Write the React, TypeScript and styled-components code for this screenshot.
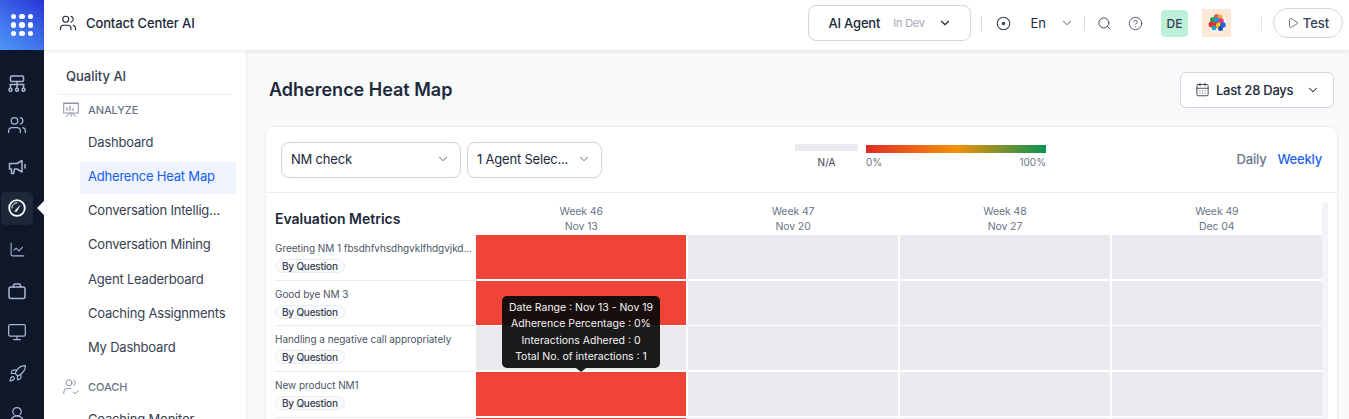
import React from "react";
import styled, { createGlobalStyle } from "styled-components";
import {
  Users, ChartLine, Monitor, Rocket, UserRound, ChevronDown,
  Search, CircleHelp, Play, CalendarDays,
} from "lucide-react";

const Global = createGlobalStyle`
  html, body { margin: 0; padding: 0; height: 100%; overflow: hidden; background: #f8f9fb; }
  #root { height: 100%; }
  * { box-sizing: border-box; }
  body { font-family: Inter, "Noto Sans", "Liberation Sans", sans-serif; color: #202939; }
`;

const Shell = styled.div`
  display: flex;
  width: 1349px;
  height: 419px;
  overflow: hidden;
`;

const Rail = styled.nav`
  width: 44px;
  flex: none;
  background: #0f172a;
  display: flex;
  flex-direction: column;
`;

const AppTile = styled.div`
  height: 50px;
  flex: none;
  background: linear-gradient(35deg, #4f97fa 0%, #3a66e6 55%, #2a33d6 100%);
  display: grid;
  grid-template-columns: repeat(3, 5.5px);
  grid-auto-rows: 5.5px;
  gap: 2.8px;
  align-content: center;
  justify-content: center;
`;

const Dot = styled.span`
  border-radius: 50%;
  background: #fff;
`;

const RailList = styled.div`
  display: flex;
  flex-direction: column;
  gap: 8.4px;
  padding: 17.5px 0 0 1px;
`;

const RailSlot = styled.div<{ $active?: boolean }>`
  position: relative;
  width: 32px;
  height: 33px;
  flex: none;
  display: flex;
  align-items: center;
  justify-content: center;
  border-radius: 5px;
  color: ${(p) => (p.$active ? "#ffffff" : "#a9b9cd")};
  background: ${(p) => (p.$active ? "#1c2738" : "transparent")};
`;

const RailPointer = styled.span`
  position: absolute;
  left: 36px;
  top: 9px;
  width: 0;
  height: 0;
  border-top: 7px solid transparent;
  border-bottom: 7px solid transparent;
  border-right: 7px solid #ffffff;
`;

const Main = styled.div`
  flex: 1;
  min-width: 0;
  display: flex;
  flex-direction: column;
`;

const Header = styled.header`
  height: 50px;
  flex: none;
  background: #fff;
  display: flex;
  align-items: center;
  padding: 0 6px 0 15px;
  box-shadow: 0 1px 4px rgba(16, 24, 40, 0.1);
  position: relative;
  z-index: 2;
`;

const Product = styled.div`
  display: flex;
  align-items: center;
  gap: 9px;
  font-size: 13px;
  font-weight: 500;
  letter-spacing: -0.12px;
  color: #202939;
  padding-bottom: 5px;
`;

const HeaderRight = styled.div`
  margin-left: auto;
  display: flex;
  align-items: center;
`;

const AgentBox = styled.div`
  width: 163px;
  height: 36px;
  margin-top: -4px;
  border: 1px solid #d3d6e0;
  border-radius: 8px;
  display: flex;
  align-items: center;
  padding: 0 18px 0 20px;
  font-size: 13px;
  font-weight: 500;
  letter-spacing: -0.2px;
  color: #202939;
`;

const AgentStatus = styled.span`
  margin-left: 13px;
  font-size: 11px;
  font-weight: 400;
  color: #a6a8b8;
  flex: 1;
`;

const Sep = styled.span<{ $ml: number; $pink?: boolean }>`
  width: 1px;
  height: 15px;
  margin-top: -4px;
  margin-left: ${(p) => p.$ml}px;
  background: ${(p) => (p.$pink ? "#ecdfe6" : "#d5d9e2")};
`;

const HeaderSlot = styled.span<{ $ml: number }>`
  display: inline-flex;
  align-items: center;
  margin-left: ${(p) => p.$ml}px;
  margin-top: -4px;
  color: #364152;
`;

const Lang = styled.span`
  font-size: 13px;
  font-weight: 400;
  color: #202939;
`;

const Initials = styled.span`
  width: 27px;
  height: 27px;
  margin-left: 18px;
  margin-top: -3px;
  background: #bdf0d8;
  border-radius: 4px;
  display: flex;
  align-items: center;
  justify-content: center;
  font-size: 12px;
  font-weight: 500;
  color: #364152;
`;

const AvatarTile = styled.span`
  width: 29px;
  height: 28px;
  margin-left: 14px;
  margin-top: -4px;
  background: #fde8d7;
  display: flex;
  align-items: center;
  justify-content: center;
`;

const TestButton = styled.button`
  width: 70px;
  height: 30px;
  margin-left: 11px;
  margin-top: -4px;
  border: 1px solid #d3d6e0;
  border-radius: 15px;
  background: #fff;
  display: flex;
  align-items: center;
  justify-content: center;
  gap: 4px;
  font: 500 13px Inter, sans-serif;
  color: #364152;
  padding: 0;
`;

const Body = styled.div`
  flex: 1;
  min-height: 0;
  display: flex;
`;

const Sidebar = styled.aside`
  width: 203px;
  flex: none;
  background: #fff;
  border-right: 1px solid #eaecf0;
  padding: 16px 14px 0;
  overflow: hidden;
`;

const SideTitle = styled.div`
  font-size: 13px;
  font-weight: 500;
  line-height: 20px;
  color: #364152;
  padding: 0 0 8px 8px;
  border-bottom: 1px solid #eaecf0;
`;

const Section = styled.div<{ $mt?: number }>`
  display: flex;
  align-items: center;
  gap: 9px;
  height: 30px;
  margin: ${(p) => p.$mt ?? 0}px 0 3px;
  padding-left: 5px;
  font-size: 11px;
  font-weight: 500;
  letter-spacing: -0.1px;
  color: #697586;
  svg { flex: none; color: #8a93a3; }
`;

const NavList = styled.div`
  display: flex;
  flex-direction: column;
  gap: 2.15px;
  margin-left: 22px;
  width: 156px;
`;

const NavItem = styled.div<{ $active?: boolean }>`
  height: 32px;
  line-height: 29px;
  padding: 0 9px 0 8px;
  font-size: 13px;
  letter-spacing: -0.2px;
  white-space: nowrap;
  overflow: hidden;
  text-overflow: ellipsis;
  color: ${(p) => (p.$active ? "#155eef" : "#364152")};
  background: ${(p) => (p.$active ? "#eff4ff" : "transparent")};
  border-radius: 2px;
`;

const Content = styled.main`
  flex: 1;
  min-width: 0;
  padding: 22px 11px 0 18px;
  overflow: hidden;
`;

const TitleRow = styled.div`
  display: flex;
  align-items: center;
  justify-content: space-between;
  height: 36px;
  margin-bottom: 18px;
  padding-right: 4px;
`;

const PageTitle = styled.h1`
  margin: 0 0 2px 4px;
  font-size: 18px;
  font-weight: 600;
  color: #202939;
`;

const DateButton = styled.div`
  width: 154px;
  height: 36px;
  background: #fff;
  border: 1px solid #d3d6e0;
  border-radius: 6px;
  display: flex;
  align-items: center;
  padding: 0 13px 1px 14px;
  gap: 6px;
  font-size: 13px;
  font-weight: 500;
  letter-spacing: -0.25px;
  color: #202939;
  span { flex: 1; }
`;

const Card = styled.section`
  background: #fff;
  border: 1px solid #eaecf0;
  border-radius: 8px 8px 0 0;
  height: 320px;
  overflow: hidden;
`;

const Toolbar = styled.div`
  height: 66px;
  border-bottom: 1px solid #eaecf0;
  display: flex;
  align-items: center;
  padding: 0 15px;
`;

const Select = styled.div<{ $w: number; $ml?: number }>`
  width: ${(p) => p.$w}px;
  height: 36px;
  margin-left: ${(p) => p.$ml ?? 0}px;
  border: 1px solid #d0d3de;
  border-radius: 8px;
  display: flex;
  align-items: center;
  justify-content: space-between;
  padding: 0 10px 1px 9px;
  font-size: 13px;
  letter-spacing: -0.2px;
  color: #202939;
  svg { color: #4b5565; flex: none; }
`;

const Legend = styled.div`
  display: flex;
  gap: 8px;
  margin-left: 193px;
  margin-top: -6px;
`;

const LegendCol = styled.div<{ $w: number }>`
  width: ${(p) => p.$w}px;
  display: flex;
  flex-direction: column;
`;

const NaSwatch = styled.div`
  height: 7px;
  background: #eaebef;
`;

const GradientBar = styled.div`
  height: 8px;
  margin-top: 1px;
  background: linear-gradient(90deg, #dc2e26 0%, #f79009 50%, #079455 100%);
`;

const LegendLabels = styled.div<{ $center?: boolean; $top: number }>`
  display: flex;
  justify-content: ${(p) => (p.$center ? "center" : "space-between")};
  margin-top: ${(p) => p.$top}px;
  font-size: 10px;
  line-height: 14px;
  color: ${(p) => (p.$center ? "#364152" : "#697586")};
`;

const Views = styled.div`
  margin-left: auto;
  display: flex;
  gap: 11px;
  font-size: 13px;
  font-weight: 500;
  letter-spacing: -0.2px;
  padding-bottom: 2px;
`;

const ViewTab = styled.span<{ $active?: boolean }>`
  color: ${(p) => (p.$active ? "#2563eb" : "#697586")};
`;

const TableArea = styled.div`
  position: relative;
  display: flex;
  padding-left: 9px;
`;

const Table = styled.div`
  width: 1047px;
  flex: none;
`;

const Scrollbar = styled.div`
  width: 6px;
  height: 240px;
  margin-top: 9px;
  background: #f2f4f7;
  border-radius: 3px;
`;

const HeadRow = styled.div`
  display: grid;
  grid-template-columns: 201px 846px;
  height: 42px;
`;

const MetricsTitle = styled.div`
  font-size: 14px;
  font-weight: 600;
  line-height: 52px;
  color: #202939;
`;

const ColumnGrid = styled.div`
  display: grid;
  grid-template-columns: repeat(4, 1fr);
  column-gap: 1.5px;
`;

const WeekHead = styled.div`
  padding-top: 11px;
  text-align: center;
  font-size: 10.5px;
  letter-spacing: -0.1px;
  line-height: 15px;
  color: #697586;
`;

const Row = styled.div`
  display: grid;
  grid-template-columns: 201px 846px;
  height: 45.67px;
`;

const RowLabel = styled.div`
  border-bottom: 1px solid #eaecf0;
  padding-top: 5px;
  overflow: hidden;
`;

const MetricName = styled.div`
  font-size: 10px;
  letter-spacing: -0.05px;
  line-height: 16px;
  width: 198px;
  color: #4b5565;
  white-space: nowrap;
  overflow: hidden;
  text-overflow: ellipsis;
`;

const Pill = styled.div`
  width: fit-content;
  margin-top: 3px;
  height: 14px;
  line-height: 12px;
  padding: 0 6px;
  border: 1px solid #eaecf0;
  border-radius: 7px;
  background: #f9fafb;
  font-size: 10px;
  font-weight: 500;
  letter-spacing: -0.2px;
  color: #364152;
`;

const Cell = styled.div<{ $red?: boolean }>`
  height: 44px;
  background: ${(p) => (p.$red ? "#f04438" : "#e9eaee")};
`;

const Tooltip = styled.div`
  position: absolute;
  left: 236px;
  top: 103px;
  width: 158px;
  height: 72px;
  padding-top: 4px;
  border-radius: 5px;
  background: rgba(10, 10, 10, 0.93);
  color: #f4f4f4;
  font-size: 10.5px;
  line-height: 16.4px;
  text-align: center;
  white-space: nowrap;
  &::after {
    content: "";
    position: absolute;
    left: 74px;
    bottom: -4px;
    border-top: 4px solid rgba(10, 10, 10, 0.93);
    border-left: 5px solid transparent;
    border-right: 5px solid transparent;
  }
`;

const NetworkIcon = () => (
  <svg width="20" height="20" viewBox="0 0 20 20" fill="none" stroke="currentColor" strokeWidth="1.500" strokeLinecap="round" strokeLinejoin="round">
    <rect x="3.500" y="2" width="13" height="5.500" rx="1.200" />
    <path d="M10 7.500v3M3 10.500h14M3.500 10.500v3.500M10 10.500v3.500M16.500 10.500v3.500" />
    <circle cx="3.500" cy="15.700" r="1.500" />
    <circle cx="10" cy="15.700" r="1.500" />
    <circle cx="16.500" cy="15.700" r="1.500" />
  </svg>
);

const MegaphoneIcon = () => (
  <svg width="20" height="20" viewBox="0 0 20 20" fill="none" stroke="currentColor" strokeWidth="1.500" strokeLinecap="round" strokeLinejoin="round">
    <path d="M2.500 6.500h7.500l5-3v11.500l-5-3H7.500l-1 4.500H4.500l0-4.500H2.500z" />
    <path d="M18 7.500v3.500" />
  </svg>
);

const GaugeIcon = () => (
  <svg width="20" height="20" viewBox="0 0 20 20" fill="none" stroke="currentColor" strokeLinecap="round">
    <circle cx="10" cy="10" r="7.800" strokeWidth="1.800" />
    <path d="M4.800 10a5.200 5.200 0 0 1 5.200-5.200" strokeWidth="1" />
    <path d="M7 13.400 13.800 6.200 9.800 13.800 Z" fill="currentColor" stroke="none" />
  </svg>
);

const BriefcaseIcon = () => (
  <svg width="20" height="20" viewBox="0 0 20 20" fill="none" stroke="currentColor" strokeWidth="1.500" strokeLinecap="round" strokeLinejoin="round">
    <rect x="2" y="6" width="16" height="11.500" rx="2" />
    <path d="M6.500 6V4.500A1.500 1.500 0 0 1 8 3h4a1.500 1.500 0 0 1 1.500 1.500V6" />
  </svg>
);

const TargetIcon = () => (
  <svg width="15" height="15" viewBox="0 0 15 15" fill="none" stroke="currentColor" strokeWidth="1.100">
    <circle cx="7.500" cy="7.500" r="6.300" />
    <circle cx="7.500" cy="7.500" r="1.700" fill="currentColor" stroke="none" />
  </svg>
);

const PresentationIcon = () => (
  <svg width="16" height="16" viewBox="0 0 16 16" fill="none" stroke="currentColor" strokeWidth="1" strokeLinecap="round">
    <rect x="0.700" y="1.500" width="14.600" height="9.500" />
    <path d="M0.500 1h15M4 5.500v3M7 4v4.500M10 6.500v2" strokeWidth="1.200" />
    <path d="M3 14.500 6.500 11.500M13 14.500 9.500 11.500M8 11v3.500" />
  </svg>
);

const CoachIcon = () => (
  <svg width="16" height="16" viewBox="0 0 16 16" fill="none" stroke="currentColor" strokeWidth="1" strokeLinecap="round" strokeLinejoin="round">
    <circle cx="6" cy="3.800" r="3" />
    <path d="M10.500 1a3 3 0 0 1 0 5.500M0.800 14.500v-1.500a3.500 3.500 0 0 1 3.500-3.500h3.500M10 13l2 1.800 3.500-3" />
  </svg>
);

const Balloons = () => (
  <svg width="22" height="22" viewBox="0 0 22 22">
    <circle cx="11" cy="11.500" r="9.500" fill="#fbf3ee" />
    <circle cx="10.500" cy="4.500" r="2.500" fill="#e8503a" />
    <circle cx="14" cy="5" r="2.500" fill="#f5a623" />
    <circle cx="7" cy="8" r="3" fill="#22a447" />
    <circle cx="11" cy="8.500" r="3" fill="#1596e8" />
    <circle cx="15" cy="9" r="2.800" fill="#d93a8c" />
    <circle cx="5.500" cy="12.500" r="3" fill="#e5322d" />
    <circle cx="10" cy="13" r="3" fill="#e5322d" />
    <circle cx="13" cy="13.500" r="3" fill="#f6c915" />
    <circle cx="17" cy="13" r="2.800" fill="#2563d9" />
    <circle cx="8" cy="16" r="2.400" fill="#1aa7c9" />
    <circle cx="14.500" cy="16.500" r="2.500" fill="#1d4fc4" />
  </svg>
);

const railIcons = [
  <NetworkIcon />,
  <Users size={20} strokeWidth={1.5} />,
  <MegaphoneIcon />,
  <GaugeIcon />,
  <ChartLine size={17} strokeWidth={1.5} />,
  <BriefcaseIcon />,
  <Monitor size={20} strokeWidth={1.5} />,
  <Rocket size={19} strokeWidth={1.5} />,
  <UserRound size={20} strokeWidth={1.5} />,
];

const analyze = [
  "Dashboard",
  "Adherence Heat Map",
  "Conversation Intelligence",
  "Conversation Mining",
  "Agent Leaderboard",
  "Coaching Assignments",
  "My Dashboard",
];

const weeks = [
  ["Week 46", "Nov 13"],
  ["Week 47", "Nov 20"],
  ["Week 48", "Nov 27"],
  ["Week 49", "Dec 04"],
];

const rows: { name: string; red: boolean }[] = [
  { name: "Greeting NM 1 fbsdhfvhsdhgvklfhdgvjkd...", red: true },
  { name: "Good bye NM 3", red: true },
  { name: "Handling a negative call appropriately", red: false },
  { name: "New product NM1", red: true },
  { name: "", red: true },
];

export default function App() {
  return (
    <Shell>
      <Global />
      <Rail>
        <AppTile>
          {Array.from({ length: 9 }, (_, i) => (
            <Dot key={i} />
          ))}
        </AppTile>
        <RailList>
          {railIcons.map((icon, i) => (
            <RailSlot key={i} $active={i === 3}>
              {icon}
              {i === 3 && <RailPointer />}
            </RailSlot>
          ))}
        </RailList>
      </Rail>
      <Main>
        <Header>
          <Product>
            <Users size={18} strokeWidth={1.5} />
            Contact Center AI
          </Product>
          <HeaderRight>
            <AgentBox>
              AI Agent
              <AgentStatus>In Dev</AgentStatus>
              <ChevronDown size={14} strokeWidth={2} />
            </AgentBox>
            <Sep $ml={10} />
            <HeaderSlot $ml={14}>
              <TargetIcon />
            </HeaderSlot>
            <HeaderSlot $ml={20}>
              <Lang>En</Lang>
            </HeaderSlot>
            <HeaderSlot $ml={14}>
              <ChevronDown size={14} strokeWidth={1.5} />
            </HeaderSlot>
            <Sep $ml={10} />
            <HeaderSlot $ml={12}>
              <Search size={15} strokeWidth={1.5} />
            </HeaderSlot>
            <HeaderSlot $ml={16}>
              <CircleHelp size={15} strokeWidth={1.3} />
            </HeaderSlot>
            <Initials>DE</Initials>
            <AvatarTile>
              <Balloons />
            </AvatarTile>
            <Sep $ml={30} $pink />
            <TestButton>
              <Play size={12} strokeWidth={1.4} />
              Test
            </TestButton>
          </HeaderRight>
        </Header>
        <Body>
          <Sidebar>
            <SideTitle>Quality AI</SideTitle>
            <Section>
              <PresentationIcon />
              ANALYZE
            </Section>
            <NavList>
              {analyze.map((item) => (
                <NavItem key={item} $active={item === "Adherence Heat Map"}>
                  {item}
                </NavItem>
              ))}
            </NavList>
            <Section $mt={7}>
              <CoachIcon />
              COACH
            </Section>
            <NavList>
              <NavItem>Coaching Monitor</NavItem>
            </NavList>
          </Sidebar>
          <Content>
            <TitleRow>
              <PageTitle>Adherence Heat Map</PageTitle>
              <DateButton>
                <CalendarDays size={15} strokeWidth={1.3} />
                <span>Last 28 Days</span>
                <ChevronDown size={14} strokeWidth={1.8} />
              </DateButton>
            </TitleRow>
            <Card>
              <Toolbar>
                <Select $w={180}>
                  NM check
                  <ChevronDown size={14} strokeWidth={1.5} />
                </Select>
                <Select $w={135} $ml={6}>
                  1 Agent Selec...
                  <ChevronDown size={14} strokeWidth={1.5} />
                </Select>
                <Legend>
                  <LegendCol $w={63}>
                    <NaSwatch />
                    <LegendLabels $center $top={4}>
                      N/A
                    </LegendLabels>
                  </LegendCol>
                  <LegendCol $w={180}>
                    <GradientBar />
                    <LegendLabels $top={2}>
                      <span>0%</span>
                      <span>100%</span>
                    </LegendLabels>
                  </LegendCol>
                </Legend>
                <Views>
                  <ViewTab>Daily</ViewTab>
                  <ViewTab $active>Weekly</ViewTab>
                </Views>
              </Toolbar>
              <TableArea>
                <Table>
                  <HeadRow>
                    <MetricsTitle>Evaluation Metrics</MetricsTitle>
                    <ColumnGrid>
                      {weeks.map(([w, d]) => (
                        <WeekHead key={w}>
                          {w}
                          <br />
                          {d}
                        </WeekHead>
                      ))}
                    </ColumnGrid>
                  </HeadRow>
                  {rows.map((r, i) => (
                    <Row key={i}>
                      <RowLabel>
                        {r.name && <MetricName>{r.name}</MetricName>}
                        {r.name && <Pill>By Question</Pill>}
                      </RowLabel>
                      <ColumnGrid>
                        <Cell $red={r.red} />
                        <Cell />
                        <Cell />
                        <Cell />
                      </ColumnGrid>
                    </Row>
                  ))}
                </Table>
                <Scrollbar />
                <Tooltip>
                  Date Range : Nov 13 - Nov 19
                  <br />
                  Adherence Percentage : 0%
                  <br />
                  Interactions Adhered : 0
                  <br />
                  Total No. of interactions : 1
                </Tooltip>
              </TableArea>
            </Card>
          </Content>
        </Body>
      </Main>
    </Shell>
  );
}
